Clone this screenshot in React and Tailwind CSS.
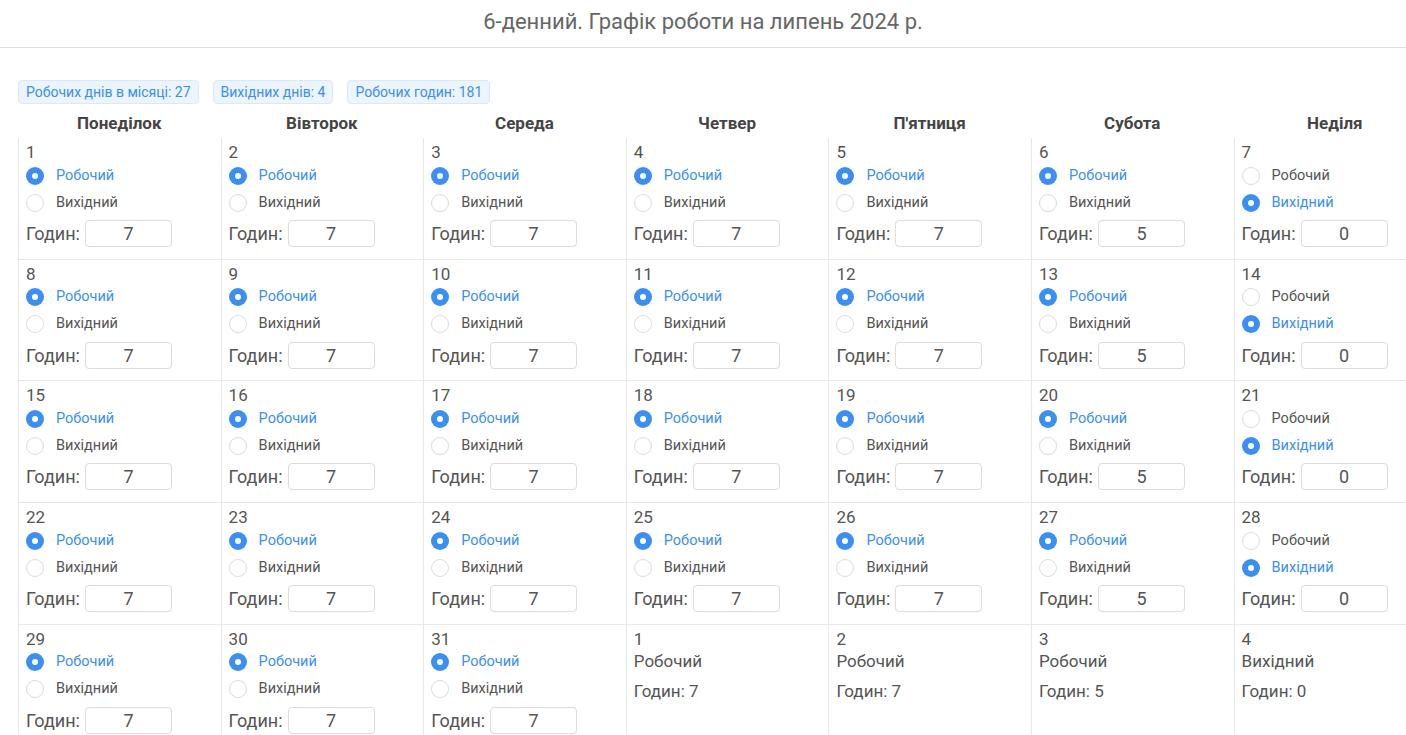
const days = []
for (let d = 1; d <= 35; d++) {
  const col = (d - 1) % 7
  const other = d > 31
  const n = other ? d - 31 : d
  const off = col === 6
  days.push({ n, other, off, hours: off ? 0 : col === 5 ? 5 : 7 })
}
const heads = ['Понеділок', 'Вівторок', 'Середа', 'Четвер', "П'ятниця", 'Субота', 'Неділя']

function Radio({ on, label }) {
  return (
    <div className="flex items-center h-[27px]">
      <span className={`w-[18px] h-[18px] rounded-full flex items-center justify-center ${on ? 'bg-[#3b8ff0]' : 'border border-[#dcdcdc] bg-white'}`}>
        {on && <span className="w-[6px] h-[6px] rounded-full bg-white" />}
      </span>
      <span className={`ml-3 text-[14.5px] ${on ? 'text-[#3b8ff0]' : 'text-[#555]'}`}>{label}</span>
    </div>
  )
}

export default function App() {
  return (
    <div className="w-[1406px] h-[735px] overflow-hidden bg-white text-[#555]" style={{ fontFamily: 'Roboto, "Liberation Sans", sans-serif' }}>
      <h1 className="text-center text-[22px] text-[#666] pt-[5px] h-[47px]">6-денний. Графік роботи на липень 2024 р.</h1>
      <div className="border-t border-[#ddd]" />
      <div className="pl-[18px] pt-[32px]">
        <div className="flex gap-[14px]">
          {['Робочих днів в місяці: 27', 'Вихідних днів: 4', 'Робочих годин: 181'].map(t => (
            <span key={t} className="h-[24px] px-[7px] flex items-center text-[14px] text-[#3b8ff0] bg-[#ecf4fd] border border-[#d9e8fb] rounded">{t}</span>
          ))}
        </div>
        <div className="grid grid-cols-[repeat(7,202.6px)] mt-[4px]">
          {heads.map(h => (
            <div key={h} className="text-center font-bold text-[17px] text-[#444] h-[30px] pt-[3px]">{h}</div>
          ))}
          {days.map((d, i) => (
            <div key={i} className="border-l border-b border-[#e8e8e8] h-[121.7px] px-[7px] pt-[4px]">
              <div className="text-[17px] leading-[20px]">{d.n}</div>
              {d.other ? (
                <>
                  <div className="text-[17px] leading-[20px] mt-[2px]">{d.off ? 'Вихідний' : 'Робочий'}</div>
                  <div className="text-[17px] mt-[8px]">Годин: {d.hours}</div>
                </>
              ) : (
                <>
                  <Radio on={!d.off} label="Робочий" />
                  <Radio on={d.off} label="Вихідний" />
                  <div className="flex items-center mt-[4px]">
                    <span className="text-[18px]">Годин:</span>
                    <span className="ml-[5px] w-[87px] h-[27px] border border-[#dcdcdc] rounded flex items-center justify-center text-[18px]">{d.hours}</span>
                  </div>
                </>
              )}
            </div>
          ))}
        </div>
      </div>
    </div>
  )
}
